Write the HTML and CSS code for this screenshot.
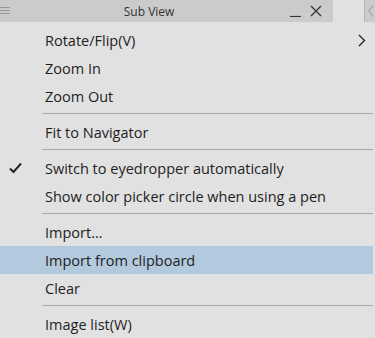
FILE: index.html
```html
<!DOCTYPE html>
<html lang="en">
<head>
    <meta charset="UTF-8">
    <meta name="viewport" content="width=device-width, initial-scale=1.0">
    <title>Sub View</title>
    <link rel="stylesheet" href="styles.css">
</head>
<body>
    <div class="window">
        <div class="titlebar">
            <div class="tb-main">
                <svg class="tb-menu" width="10" height="10" viewBox="0 0 10 10">
                    <path d="M0 1.5H10M0 4.5H10M0 7.5H10" stroke="#9a9a9a" stroke-width="1"/>
                </svg>
                <span class="tb-title">Sub View</span>
                <svg class="tb-btn" width="12" height="12" viewBox="0 0 12 12">
                    <path d="M0 11.5H11" stroke="#333" stroke-width="1.2"/>
                </svg>
                <svg class="tb-btn" width="12" height="12" viewBox="0 0 12 12">
                    <path d="M1 1L11 11M11 1L1 11" stroke="#333" stroke-width="1.3"/>
                </svg>
            </div>
            <div class="tb-gap"></div>
            <div class="tb-side">
                <svg width="8" height="12" viewBox="0 0 8 12">
                    <path d="M6 1L1.5 6L6 11" fill="none" stroke="#aaa" stroke-width="1.2"/>
                </svg>
            </div>
        </div>

        <div class="menu">
            <div class="item">
                <span class="label">Rotate/Flip(V)</span>
                <svg class="arrow" width="8" height="13" viewBox="0 0 8 13">
                    <path d="M1 1L6.5 6.5L1 12" fill="none" stroke="#222" stroke-width="1.3"/>
                </svg>
            </div>
            <div class="item"><span class="label">Zoom In</span></div>
            <div class="item"><span class="label">Zoom Out</span></div>
            <div class="sep"></div>
            <div class="item"><span class="label">Fit to Navigator</span></div>
            <div class="sep"></div>
            <div class="item">
                <svg class="check" width="14" height="12" viewBox="0 0 14 12">
                    <path d="M1 6.5L4.5 10L12 1.5" fill="none" stroke="#222" stroke-width="2"/>
                </svg>
                <span class="label">Switch to eyedropper automatically</span>
            </div>
            <div class="item"><span class="label">Show color picker circle when using a pen</span></div>
            <div class="sep"></div>
            <div class="item"><span class="label">Import...</span></div>
            <div class="item active"><span class="label">Import from clipboard</span></div>
            <div class="item"><span class="label">Clear</span></div>
            <div class="sep"></div>
            <div class="item"><span class="label">Image list(W)</span></div>
        </div>
    </div>
</body>
</html>
```

FILE: styles.css
```css
body {
    margin: 0;
    font-family: "Open Sans", "Noto Sans", sans-serif;
    background: #e1e1e1;
}
.window {
    width: 375px;
    height: 338px;
    overflow: hidden;
    background: #e1e1e1;
}
.titlebar {
    display: flex;
    height: 22px;
}
.tb-main {
    width: 334px;
    display: flex;
    align-items: center;
    background: #cbcbcb;
    padding-right: 11px;
    box-sizing: border-box;
}
.tb-title {
    flex: 1;
    text-align: center;
    font-size: 12px;
    color: #333;
    padding-left: 6px;
}
.tb-btn {
    margin-left: 8px;
}
.tb-gap {
    width: 31px;
    background: #e2e2e2;
}
.tb-side {
    flex: 1;
    display: flex;
    align-items: center;
    padding-left: 2px;
    background: #cbcbcb;
    border-left: 1px solid #b4b4b4;
}
.menu {
    width: 373px;
    padding-top: 4px;
}
.item {
    position: relative;
    display: flex;
    align-items: center;
    height: 28px;
    padding-left: 45px;
    font-size: 14.5px;
    color: #1e1e1e;
}
.item.active {
    background: #b3c9de;
}
.label {
    flex: 1;
    white-space: nowrap;
}
.arrow {
    margin-right: 7px;
}
.check {
    position: absolute;
    left: 9px;
    top: 8px;
}
.sep {
    height: 8px;
    margin-left: 42px;
    box-sizing: border-box;
    border-top: 3px solid transparent;
    background: linear-gradient(#a8a8a8, #a8a8a8) no-repeat 0 0 / 100% 1px;
    background-origin: padding-box;
}
```
